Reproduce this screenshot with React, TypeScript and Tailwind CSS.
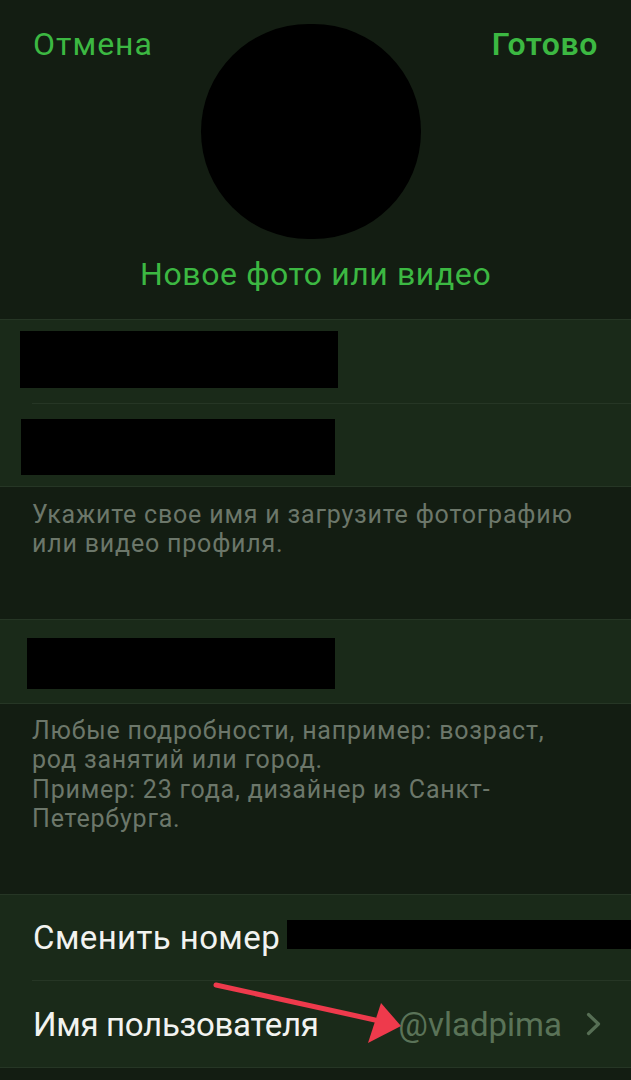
import React from "react";

const font = { fontFamily: "Roboto, 'Noto Sans', sans-serif" };

export default function App() {
  return (
    <div
      className="relative w-[631px] h-[1080px] overflow-hidden bg-[#131d12]"
      style={font}
    >
      {/* Header */}
      <div className="h-[319px] flex flex-col">
        <div className="w-full grid grid-cols-[201px_220px_1fr] pt-[24px]">
          <div className="pl-[33px] pt-[4px] text-[32px] leading-[32px] tracking-[1px] text-[#3cb842]">
            Отмена
          </div>
          <div className="w-[220px] h-[215px] rounded-full bg-black" />
          <div className="pr-[33px] pt-[4px] text-right text-[32px] leading-[32px] tracking-[0.6px] font-semibold text-[#3cb842]">
            Готово
          </div>
        </div>
        <div className="mt-[19px] pl-[140px] text-[32px] leading-[32px] tracking-[0.6px] text-[#3cb842]">
          Новое фото или видео
        </div>
      </div>

      {/* Section 1 */}
      <div className="bg-[#1a2a19] border-y border-[#263625]">
        <div className="h-[83px] pl-[20px] pt-[11px]">
          <div className="w-[318px] h-[57px] bg-black" />
        </div>
        <div className="ml-[32px] h-px bg-[#263625]" />
        <div className="h-[82px] pl-[21px] pt-[15px]">
          <div className="w-[314px] h-[56px] bg-black" />
        </div>
      </div>
      <div className="h-[132px] px-[32px] pt-[13px] text-[25px] leading-[29.3px] tracking-[0.8px] text-[#6c776a]">
        Укажите свое имя и загрузите фотографию
        <br />
        или видео профиля.
      </div>

      {/* Section 2 */}
      <div className="bg-[#1a2a19] border-y border-[#263625]">
        <div className="h-[83px] pl-[27px] pt-[18px]">
          <div className="w-[308px] h-[51px] bg-black" />
        </div>
      </div>
      <div className="h-[190px] px-[32px] pt-[12px] text-[25px] leading-[29.3px] tracking-[0.8px] text-[#6c776a]">
        Любые подробности, например: возраст,
        <br />
        род занятий или город.
        <br />
        Пример: 23 года, дизайнер из Санкт-
        <br />
        Петербурга.
      </div>

      {/* Section 3 */}
      <div className="bg-[#1a2a19] border-y border-[#263625]">
        <div className="h-[85px] flex items-start pl-[33px] pt-[26px]">
          <span className="text-[33px] leading-[33px] tracking-[0.4px] text-[#f2f3f0] whitespace-nowrap">
            Сменить номер
          </span>
          <div className="ml-[7px] mt-[-1px] flex-1 h-[29px] bg-black" />
        </div>
        <div className="ml-[32px] h-px bg-[#263625]" />
        <div className="h-[86px] flex items-center pl-[33px] pr-[29px]">
          <span className="text-[33px] leading-[33px] tracking-[-0.3px] text-[#f2f3f0] whitespace-nowrap">
            Имя пользователя
          </span>
          <div className="flex-1" />
          <span className="text-[33px] leading-[33px] text-[#5a7358] whitespace-nowrap">
            @vladpima
          </span>
          <svg
            className="ml-[24px]"
            width="16"
            height="24"
            viewBox="0 0 16 24"
            fill="none"
          >
            <path
              d="M2.5 2.5 L12.5 12 L2.5 21.5"
              stroke="#566e54"
              strokeWidth="3.2"
              strokeLinecap="round"
              strokeLinejoin="round"
            />
          </svg>
        </div>
      </div>

      {/* Red annotation arrow */}
      <svg
        className="absolute left-0 top-0 pointer-events-none"
        width="631"
        height="1080"
        viewBox="0 0 631 1080"
      >
        <line
          x1="216"
          y1="985"
          x2="375"
          y2="1020"
          stroke="#ee3a4c"
          strokeWidth="5"
          strokeLinecap="round"
        />
        <polygon points="401,1026 381,1003 368,1043" fill="#ee3a4c" />
      </svg>
    </div>
  );
}
